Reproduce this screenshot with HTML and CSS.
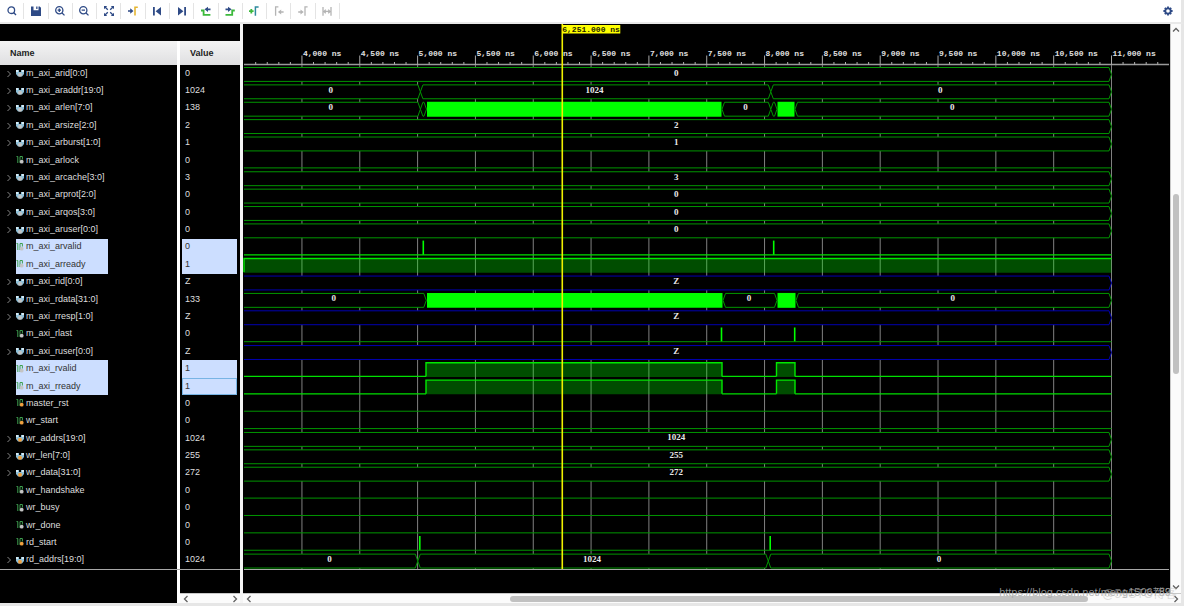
FILE: index.html
```html
<!DOCTYPE html>
<html lang="en">
<head>
<meta charset="utf-8">
<title>Waveform</title>
<link rel="stylesheet" href="styles.css">
</head>
<body>
<header class="toolbar">
  <div class="tools">
    <button class="tool" aria-label="Search"><svg viewBox="0 0 12 12"><circle cx="5.3" cy="5.2" r="3.3"/><path d="M7.8 7.7 10 10"/></svg></button>
    <button class="tool" aria-label="Save"><svg viewBox="0 0 12 12"><path class="solid" d="M1 1.5h2.5v3.7h5V1.5h1.2L11 2.8V11H1z"/><path class="solid" d="M6.2 1.5h1.3v2.6H6.2z"/></svg></button>
    <button class="tool" aria-label="Zoom in"><svg viewBox="0 0 12 12"><circle cx="5.3" cy="5.2" r="3.6"/><path d="M7.8 7.7 10.5 10.4M3.6 5.2H7M5.3 3.5v3.4"/></svg></button>
    <button class="tool" aria-label="Zoom out"><svg viewBox="0 0 12 12"><circle cx="5.3" cy="5.2" r="3.6"/><path d="M7.8 7.7 10.5 10.4M3.6 5.2H7"/></svg></button>
    <button class="tool" aria-label="Zoom fit"><svg viewBox="0 0 12 12"><path d="M2 2l2.8 2.8M10 2 7.2 4.8M2 10l2.8-2.8M10 10 7.2 7.2"/><path class="solid" d="M1 1h3.2L1 4.2zM11 1v3.2L7.8 1zM1 11V7.8L4.2 11zM11 11H7.8L11 7.8z"/></svg></button>
    <button class="tool" aria-label="Go to cursor"><svg viewBox="0 0 12 12"><path class="solid" d="M1 5.2h2.2V3.2l3.3 2.8-3.3 2.8V6.8H1z"/><path class="amber" d="M8 10.5V2.2h2.8"/></svg></button>
    <button class="tool" aria-label="Go to start"><svg viewBox="0 0 12 12"><path class="solid" d="M2 2h1.8v8.4H2zM10 2v8.4L4.6 6.2z"/></svg></button>
    <button class="tool" aria-label="Go to end"><svg viewBox="0 0 12 12"><path class="solid" d="M8.2 2H10v8.4H8.2zM2 2v8.4l5.4-4.2z"/></svg></button>
    <button class="tool" aria-label="Previous transition"><svg viewBox="0 0 12 12"><path class="green" d="M1 5.5h2.6v4.3h6.8"/><path class="solid" d="M10.5 3.4v1.8H8v1.7L4.5 4.3 8 1.8v1.6z"/></svg></button>
    <button class="tool" aria-label="Next transition"><svg viewBox="0 0 12 12"><path class="green" d="M1.5 9.8h6.7V5.5h2.6"/><path class="solid" d="M1.5 3.4v1.8H4v1.7l3.6-2.6L4 1.8v1.6z"/></svg></button>
    <button class="tool" aria-label="Add marker"><svg viewBox="0 0 12 12"><path class="green" d="M1 6.2h4.6M3.3 3.9v4.6"/><path class="teal" d="M7.4 10.8V2h3.2"/></svg></button>
    <button class="tool" aria-label="Previous marker" disabled><svg viewBox="0 0 12 12"><path d="M5.4 1.8H2.6v9"/><path class="solid" d="M10.6 6.2v1.6H8.2v1.6L4.9 7l3.3-2.4v1.6z"/></svg></button>
    <button class="tool" aria-label="Next marker" disabled><svg viewBox="0 0 12 12"><path d="M10.6 1.8H8v9"/><path class="solid" d="M1.2 6.2v1.6h2.3v1.6L6.7 7 3.5 4.6v1.6z"/></svg></button>
    <button class="tool" aria-label="Swap cursors" disabled><svg viewBox="0 0 12 12"><path d="M2 2v8.8M10 2v8.8M3 6.4h6M4.8 4.6 3 6.4l1.8 1.8M7.2 4.6 9 6.4 7.2 8.2"/></svg></button>
  </div>
  <button class="tool settings" aria-label="Settings"><svg viewBox="0 0 12 12"><circle class="thick" cx="6" cy="6" r="2.7"/><path class="thick" d="M6 1.4v2M6 8.6v2M1.4 6h2M8.6 6h2M2.8 2.8l1.2 1.2M8 8l1.2 1.2M2.8 9.2 4 8M8 4l1.2-1.2"/></svg></button>
</header>
<main class="viewer">
  <section class="signals">
    <table class="grid">
      <thead><tr><th scope="col">Name</th><th scope="col">Value</th></tr></thead>
      <tbody id="rows"></tbody>
    </table>
    <div class="foot">
      <div class="foot-name"></div>
      <div class="foot-value">
        <div class="hbar">
          <button aria-label="Scroll values left"><svg viewBox="0 0 8 8"><path d="M5.5 1 2.5 4l3 3"/></svg></button>
          <button aria-label="Scroll values right"><svg viewBox="0 0 8 8"><path d="M2.5 1l3 3-3 3"/></svg></button>
        </div>
      </div>
    </div>
  </section>
  <section class="waves">
    <div class="stage">
      <div class="canvas" id="canvas"></div>
      <div class="vbar">
        <button aria-label="Scroll up"><svg viewBox="0 0 8 8"><path d="M1 5.5l3-3 3 3"/></svg></button>
        <div class="vtrack"><div class="vthumb"></div></div>
        <button aria-label="Scroll down"><svg viewBox="0 0 8 8"><path d="M1 2.5l3 3 3-3"/></svg></button>
      </div>
    </div>
    <div class="hbar">
      <button aria-label="Scroll left"><svg viewBox="0 0 8 8"><path d="M5.5 1 2.5 4l3 3"/></svg></button>
      <div class="htrack"><div class="hthumb"></div></div>
      <button aria-label="Scroll right"><svg viewBox="0 0 8 8"><path d="M2.5 1l3 3-3 3"/></svg></button>
    </div>
    <span class="mark mark-url">https://blog.csdn.net/meng1506789</span>
    <span class="mark mark-site">@51CTO博客</span>
  </section>
</main>
<footer class="edge"></footer>
<script src="wave.js"></script>
</body>
</html>
```

FILE: styles.css
```css
* { box-sizing: border-box; }

body {
  margin: 0;
  height: 100vh;
  display: flex;
  flex-direction: column;
  overflow: hidden;
  background: #f4f4f4;
  font-family: "Liberation Sans", Arial, sans-serif;
  font-size: 9px;
}

button {
  border: 0;
  padding: 0;
  background: none;
  display: flex;
  align-items: center;
  justify-content: center;
}

.toolbar {
  flex: none;
  height: 24px;
  display: flex;
  justify-content: space-between;
  background: #fff;
  border-bottom: 2px solid #e9e9e9;
  border-right: 3px solid #e6e6e6;
}

.tools {
  width: 340px;
  display: grid;
  grid-template-columns: repeat(14, 1fr);
  padding: 3px 0;
}

.tool { border-right: 1px solid #e4e4e4; }
.tool svg {
  width: 12px;
  height: 12px;
  fill: none;
  stroke: #2e4a86;
  stroke-width: 1.3;
}
.tool .solid { fill: #2e4a86; stroke: none; }
.tool .thick { stroke-width: 1.8; }
.tool .amber { stroke: #e5b632; stroke-width: 1.6; }
.tool .green { stroke: #3cb93c; stroke-width: 1.8; }
.tool .teal { stroke: #2c8a9c; stroke-width: 1.5; }
.tool:disabled svg { stroke: #b4b4b4; }
.tool:disabled .solid { fill: #b4b4b4; }
.settings { border: 0; width: 26px; }

.viewer {
  flex: 1;
  min-height: 0;
  display: flex;
  border-right: 3px solid #e6e6e6;
}

.signals {
  flex: none;
  width: 243px;
  display: flex;
  flex-direction: column;
  padding-top: 17px;
  background: #000;
  border-right: 3px solid #f4f4f4;
}

.grid {
  flex: 1;
  min-height: 0;
  display: flex;
  flex-direction: column;
  border-bottom: 1px solid #a8a8a8;
}
.grid tbody {
  flex: 1;
  display: grid;
  grid-auto-rows: 1fr;
}
.grid tr, .foot {
  display: grid;
  grid-template-columns: 180px 1fr;
}
.grid thead { display: block; }
.grid th {
  height: 24px;
  padding: 0 10px;
  line-height: 24px;
  text-align: left;
  color: #222;
  background: linear-gradient(#f4f4f4, #dfdfe1);
}
.grid th:first-child, .name, .foot-name { border-right: 3px solid #fff; }

.name, .value {
  padding: 0;
  min-height: 0;
  color: #dedede;
  display: flex;
  align-items: center;
}
.name { padding-left: 6px; }
.label {
  display: flex;
  align-items: center;
  align-self: stretch;
  gap: 2px;
  width: 92px;
  padding-bottom: 2px;
  white-space: nowrap;
}
.expand { width: 10px; height: 10px; flex: none; }
.expand svg { width: 6px; height: 8px; margin-right: 4px; fill: none; stroke: #888; }
.icon { width: 8px; height: 9px; flex: none; }

.value { padding: 0 3px 0 2px; }
.value span {
  flex: 1;
  align-self: stretch;
  display: flex;
  align-items: center;
  padding: 0 0 2px 3px;
}
.selected .label, .selected .value span { background: #ccdeff; color: #333; }
.current .value span { outline: 1px solid #78b4e4; outline-offset: -1px; }

.foot { height: 33px; flex: none; }
.foot-value { display: flex; align-items: flex-end; }

.waves {
  flex: 1;
  min-width: 0;
  display: flex;
  flex-direction: column;
  position: relative;
  background: #000;
}
.stage { flex: 1; min-height: 0; display: flex; }
.canvas { flex: 1; min-width: 0; }
.canvas svg { display: block; width: 100%; height: 100%; }

.vbar {
  width: 11px;
  display: flex;
  flex-direction: column;
  align-items: center;
  background: #fbfbfb;
  border-left: 1px solid #c8c8c8;
}
.vbar button { height: 12px; width: 10px; }
.vtrack { flex: 1; width: 6px; display: grid; grid-template-rows: 29fr 33fr 38fr; }
.vthumb { grid-row: 2; background: #c1c1c1; border-radius: 3px; }

.hbar {
  width: 100%;
  flex: none;
  height: 10px;
  display: flex;
  justify-content: space-between;
  align-items: center;
  background: #fbfbfb;
  border-top: 1px solid #c8c8c8;
}
.hbar button { width: 11px; height: 9px; }
.htrack { flex: 1; height: 6px; display: grid; grid-template-columns: 28fr 63fr 9fr; }
.hthumb { grid-column: 2; background: #c1c1c1; border-radius: 3px; }
.hbar svg, .vbar svg { width: 8px; height: 8px; fill: none; stroke: #606060; stroke-width: 1.3; }

.edge { flex: none; height: 3px; background: #e6e6e6; }

.ruler-text, .cursor-text { font: bold 8px "Liberation Mono", monospace; }
.ruler-text { fill: #e0e0e0; }
.cursor-text { fill: #222200; }
.wave-text {
  font: bold 9px "Liberation Serif", serif;
  fill: #e8e8e8;
  text-anchor: middle;
}

.mark {
  position: absolute;
  white-space: nowrap;
  pointer-events: none;
  color: rgba(165, 165, 165, 0.85);
}
.mark-url { right: 10px; bottom: 5px; font-size: 11px; }
.mark-site {
  right: 4px;
  bottom: 2px;
  font-family: "Liberation Sans", "Noto Sans CJK SC", sans-serif;
  font-size: 12px;
  color: rgba(190, 190, 190, 0.5);
}
```

FILE: wave.js
```js
// Horizontal positions are pixels from the left edge of the wave canvas.
const END = 868.5;
const A = 177.4, B = 527.8;
const signals = [
  ["m_axi_arid[0:0]", "0", "bus", [[0, END, "0"]]],
  ["m_axi_araddr[19:0]", "1024", "bus", [[0, A, "0"], [A, B, "1024"], [B, END, "0"]]],
  ["m_axi_arlen[7:0]", "138", "bus", [[0, A, "0"], [A, 183.5, ""], [184, 478.5, "#"], [479, B, "0"], [B, 534, ""], [534.5, 551.5, "#"], [552, END, "0"]]],
  ["m_axi_arsize[2:0]", "2", "bus", [[0, END, "2"]]],
  ["m_axi_arburst[1:0]", "1", "bus", [[0, END, "1"]]],
  ["m_axi_arlock", "0", "bit", []],
  ["m_axi_arcache[3:0]", "3", "bus", [[0, END, "3"]]],
  ["m_axi_arprot[2:0]", "0", "bus", [[0, END, "0"]]],
  ["m_axi_arqos[3:0]", "0", "bus", [[0, END, "0"]]],
  ["m_axi_aruser[0:0]", "0", "bus", [[0, END, "0"]]],
  ["m_axi_arvalid", "0", "bit", [[180.3], [530.7]], "sel"],
  ["m_axi_arready", "1", "bit", [[1, END]], "sel"],
  ["m_axi_rid[0:0]", "Z", "bus", [[0, END, "Z"]], "z"],
  ["m_axi_rdata[31:0]", "133", "bus", [[0, 183.3, "0"], [184, 479.5, "#"], [480, 534, "0"], [534.5, 552.5, "#"], [553, END, "0"]]],
  ["m_axi_rresp[1:0]", "Z", "bus", [[0, END, "Z"]], "z"],
  ["m_axi_rlast", "0", "bit", [[478.5], [551.7]]],
  ["m_axi_ruser[0:0]", "Z", "bus", [[0, END, "Z"]], "z"],
  ["m_axi_rvalid", "1", "bit", [[183, 479], [533.5, 552]], "sel"],
  ["m_axi_rready", "1", "bit", [[183, 479], [533.5, 552]], "sel current"],
  ["master_rst", "0", "bit", [], "input"],
  ["wr_start", "0", "bit", [], "input"],
  ["wr_addrs[19:0]", "1024", "bus", [[0, END, "1024"]], "input"],
  ["wr_len[7:0]", "255", "bus", [[0, END, "255"]], "input"],
  ["wr_data[31:0]", "272", "bus", [[0, END, "272"]], "input"],
  ["wr_handshake", "0", "bit", []],
  ["wr_busy", "0", "bit", []],
  ["wr_done", "0", "bit", []],
  ["rd_start", "0", "bit", [[176.8], [527.2]], "input"],
  ["rd_addrs[19:0]", "1024", "bus", [[0, 174.8, "0"], [174.8, 525.3, "1024"], [525.3, END, "0"]], "input"]
];

function icon(kind, flags) {
  const dot = flags.includes("input") ? "#f0a040" : "#c4c4c4";
  if (kind === "bus") {
    return `<svg class="icon" viewBox="0 0 8 9"><path fill="#8fc0d8" d="M0 2h3v2h2V2h3v4L6 8.5H2L0 6z"/><path fill="#d8eaf2" d="M0 2h2v2H0zM6 2h2v2H6z"/><circle cx="4" cy="6.7" r="2" fill="${dot}"/></svg>`;
  }
  return `<svg class="icon" viewBox="0 0 8 9"><path fill="none" stroke="#3fa050" d="M.5 1.5h1.3v6.5M4 8V1.5h2.4v3"/><circle cx="5.7" cy="6.7" r="1.9" fill="${dot}"/></svg>`;
}

document.getElementById("rows").innerHTML = signals.map(([name, value, kind, , flags = ""]) => {
  const cls = (flags.includes("sel") ? "selected " : "") + (flags.includes("current") ? "current" : "");
  const expand = kind === "bus"
    ? `<button class="expand" aria-label="Expand ${name}"><svg viewBox="0 0 6 8"><path d="M1.5 1l3 3-3 3"/></svg></button>`
    : `<span class="expand"></span>`;
  return `<tr class="${cls}"><td class="name">${expand}<span class="label">${icon(kind, flags)}${name}</span></td><td class="value"><span>${value}</span></td></tr>`;
}).join("");

const RULER = 41;
const timeX = t => 174.6 + (t - 5000) * 0.11565;

function line(x1, y1, x2, y2, color, width = 1) {
  return `<path d="M${x1} ${y1}L${x2} ${y2}" stroke="${color}" stroke-width="${width}"/>`;
}

function drawBus(segments, top, flags) {
  const color = flags.includes("z") ? "#0000b0" : "#009600";
  const y1 = top + 2.5, y2 = top + 16.4, mid = (y1 + y2) / 2;
  let out = "";
  for (const [a, b, text] of segments) {
    if (text === "#") {
      out += `<path d="M${a} ${y1 - 0.5}H${b}V${y2 + 0.5}H${a}z" fill="#00ff00"/>`;
      continue;
    }
    const start = a === 0 ? `M1 ${y2}V${y1}` : `M${a + 2.5} ${y2}L${a} ${mid}L${a + 2.5} ${y1}`;
    const shape = `${start}H${b - 2.5}L${b} ${mid}L${b - 2.5} ${y2}`;
    out += `<path d="${shape}z" fill="#000"/>`;
    const edge = a === 0 ? `M1 ${y1}` : `M${a + 2.5} ${y2}L${a} ${mid}L${a + 2.5} ${y1}`;
    out += `<path d="${edge}H${b - 2.5}L${b} ${mid}L${b - 2.5} ${y2}H${a === 0 ? 1 : a + 2.5}" fill="none" stroke="${color}"/>`;
    if (text) out += `<text class="wave-text" x="${(a + b) / 2 - 1}" y="${top + 10.5}">${text}</text>`;
  }
  return out;
}

function drawBit(highs, top, flags) {
  const selected = flags.includes("sel");
  const color = selected ? "#00e000" : "#009600";
  const hi = top + 2.3, lo = top + 16;
  let out = "", x = 1;
  for (const [a, b] of highs) {
    if (b === undefined) {
      out += line(a, hi - 0.5, a, lo, "#00ff00", 1.6);
      continue;
    }
    out += `<path d="M${a} ${hi}H${b}V${lo + 0.5}H${a}z" fill="#00ff00" fill-opacity=".3"/>`;
    if (a > x) out += line(x, lo, a, lo, color, 1.3);
    out += `<path d="M${a} ${lo}V${hi}H${b}${b < END ? "V" + lo : ""}" fill="none" stroke="#00e800" stroke-width="1.4"/>`;
    x = b;
  }
  if (x < END) out += line(x, lo, END, lo, color, selected ? 1.3 : 1);
  return out;
}

function render() {
  const host = document.getElementById("canvas");
  const width = host.clientWidth, height = host.clientHeight;
  const body = document.getElementById("rows").getBoundingClientRect();
  const row = body.height / signals.length;
  const bottom = RULER + body.height;
  let out = line(1, 40.5, width - 1, 40.5, "#9a9a9a", 1.5);
  for (let t = 3600; timeX(t) < width - 5; t += 100) {
    if (t % 500) {
      out += line(timeX(t), 38, timeX(t), 40.5, "#b0b0b0");
      continue;
    }
    if (t > 11000) continue;
    out += line(timeX(t), 31.5, timeX(t), 41, "#a8a8a8");
    out += line(timeX(t), 41, timeX(t), bottom, "#808080");
    out += `<text class="ruler-text" x="${timeX(t) + 1}" y="32">${t.toLocaleString("en-US")} ns</text>`;
  }
  signals.forEach(([, , kind, data, flags = ""], i) => {
    out += (kind === "bus" ? drawBus : drawBit)(data, RULER + row * i, flags);
  });
  out += line(1, bottom + 0.5, width - 1, bottom + 0.5, "#a8a8a8");
  const x = timeX(6251);
  out += line(x, 0, x, bottom, "#f0f000", 1.6);
  out += `<path d="M${x} 1h58v8.5h-58z" fill="#ffff00"/><text class="cursor-text" x="${x}" y="8">6,251.000 ns</text>`;
  host.innerHTML = `<svg viewBox="0 0 ${width} ${height}">${out}</svg>`;
}

render();
window.addEventListener("resize", render);
```
